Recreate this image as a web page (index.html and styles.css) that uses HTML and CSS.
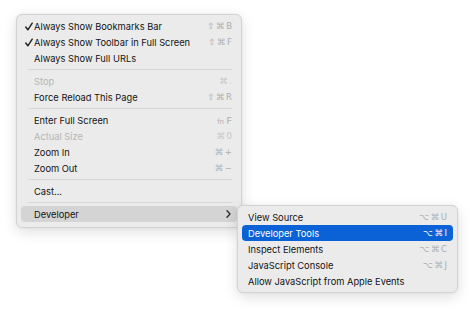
FILE: index.html
```html
<!DOCTYPE html>
<html>
<head>
<meta charset="utf-8">
<link rel="stylesheet" href="styles.css">
</head>
<body>
<div class="desk">
  <div class="menu main">
    <div class="row"><span class="check"><svg width="8" height="9" viewBox="0 0 8 9"><path d="M0.8 5 L2.9 7.8 L7.2 1.2" fill="none" stroke="#1d1d1f" stroke-width="1.4" stroke-linecap="round" stroke-linejoin="round"/></svg></span><span class="label">Always Show Bookmarks Bar</span><span class="key">⇧⌘B</span></div>
    <div class="row"><span class="check"><svg width="8" height="9" viewBox="0 0 8 9"><path d="M0.8 5 L2.9 7.8 L7.2 1.2" fill="none" stroke="#1d1d1f" stroke-width="1.4" stroke-linecap="round" stroke-linejoin="round"/></svg></span><span class="label">Always Show Toolbar in Full Screen</span><span class="key">⇧⌘F</span></div>
    <div class="row"><span class="check"></span><span class="label">Always Show Full URLs</span></div>
    <div class="sep"></div>
    <div class="row disabled"><span class="check"></span><span class="label">Stop</span><span class="key">⌘.</span></div>
    <div class="row"><span class="check"></span><span class="label">Force Reload This Page</span><span class="key">⇧⌘R</span></div>
    <div class="sep"></div>
    <div class="row"><span class="check"></span><span class="label">Enter Full Screen</span><span class="key fn"><span class="fn-small">fn</span> F</span></div>
    <div class="row disabled"><span class="check"></span><span class="label">Actual Size</span><span class="key">⌘0</span></div>
    <div class="row"><span class="check"></span><span class="label">Zoom In</span><span class="key">⌘+</span></div>
    <div class="row"><span class="check"></span><span class="label">Zoom Out</span><span class="key">⌘−</span></div>
    <div class="sep"></div>
    <div class="row"><span class="check"></span><span class="label">Cast...</span></div>
    <div class="sep"></div>
    <div class="row open"><span class="check"></span><span class="label">Developer</span><span class="chev"><svg width="5" height="8" viewBox="0 0 5 8"><path d="M1 0.8 L4 4 L1 7.2" fill="none" stroke="#2a2a2a" stroke-width="1.3" stroke-linecap="round" stroke-linejoin="round"/></svg></span></div>
  </div>
  <div class="menu sub">
    <div class="row"><span class="label">View Source</span><span class="key">⌥⌘U</span></div>
    <div class="row active"><span class="label">Developer Tools</span><span class="key">⌥⌘I</span></div>
    <div class="row"><span class="label">Inspect Elements</span><span class="key">⌥⌘C</span></div>
    <div class="row"><span class="label">JavaScript Console</span><span class="key">⌥⌘J</span></div>
    <div class="row"><span class="label">Allow JavaScript from Apple Events</span></div>
  </div>
</div>
</body>
</html>
```
FILE: styles.css
```css
html, body {
  margin: 0;
  padding: 0;
  background: #ffffff;
}
body {
  width: 474px;
  height: 312px;
  overflow: hidden;
  font-family: "Inter", "DejaVu Sans", sans-serif;
  font-size: 9.3px;
  color: #141414;
}
.desk {
  position: relative;
  width: 474px;
  height: 312px;
}
.menu {
  position: absolute;
  box-sizing: border-box;
  background: #ebebeb;
  border: 1px solid #d3d3d3;
  border-radius: 6px;
  box-shadow: 0 4px 14px rgba(0, 0, 0, 0.13), 0 0 2px rgba(0, 0, 0, 0.08);
}
.main {
  left: 16px;
  top: 14px;
  width: 226px;
  height: 214px;
  padding: 3px 4px 0 4px;
}
.sub {
  left: 237px;
  top: 205px;
  width: 221px;
  height: 88px;
  padding: 3px 4px 0 4px;
}
.row {
  display: flex;
  align-items: center;
  height: 16px;
  border-radius: 4px;
  white-space: nowrap;
}
.main .row {
  padding: 0 5px 0 3px;
}
.sub .row {
  padding: 0 6px 0 6px;
}
.check {
  width: 10px;
  flex: none;
  display: flex;
  align-items: center;
}
.check svg {
  margin-left: 1px;
}
.label {
  flex: 1;
}
.key {
  color: #adadad;
  font-family: "DejaVu Sans", sans-serif;
  font-size: 8.5px;
  letter-spacing: 1.6px;
  margin-right: -1.6px;
}
.key.fn {
  letter-spacing: 0;
  margin-right: 0;
  font-family: "Inter", sans-serif;
  font-size: 9.3px;
}
.fn-small {
  font-size: 7px;
}
.disabled {
  color: #b5b5b5;
}
.disabled .key {
  color: #c6c6c6;
}
.chev {
  display: flex;
  align-items: center;
  padding-right: 1px;
}
.sep {
  height: 1px;
  margin: 3px 5px 3px 7px;
  background: #d6d6d6;
}
.open {
  background: #d4d4d4;
}
.active {
  background: #0b62d6;
  color: #ffffff;
}
.active .key {
  color: #ffffff;
}
```
